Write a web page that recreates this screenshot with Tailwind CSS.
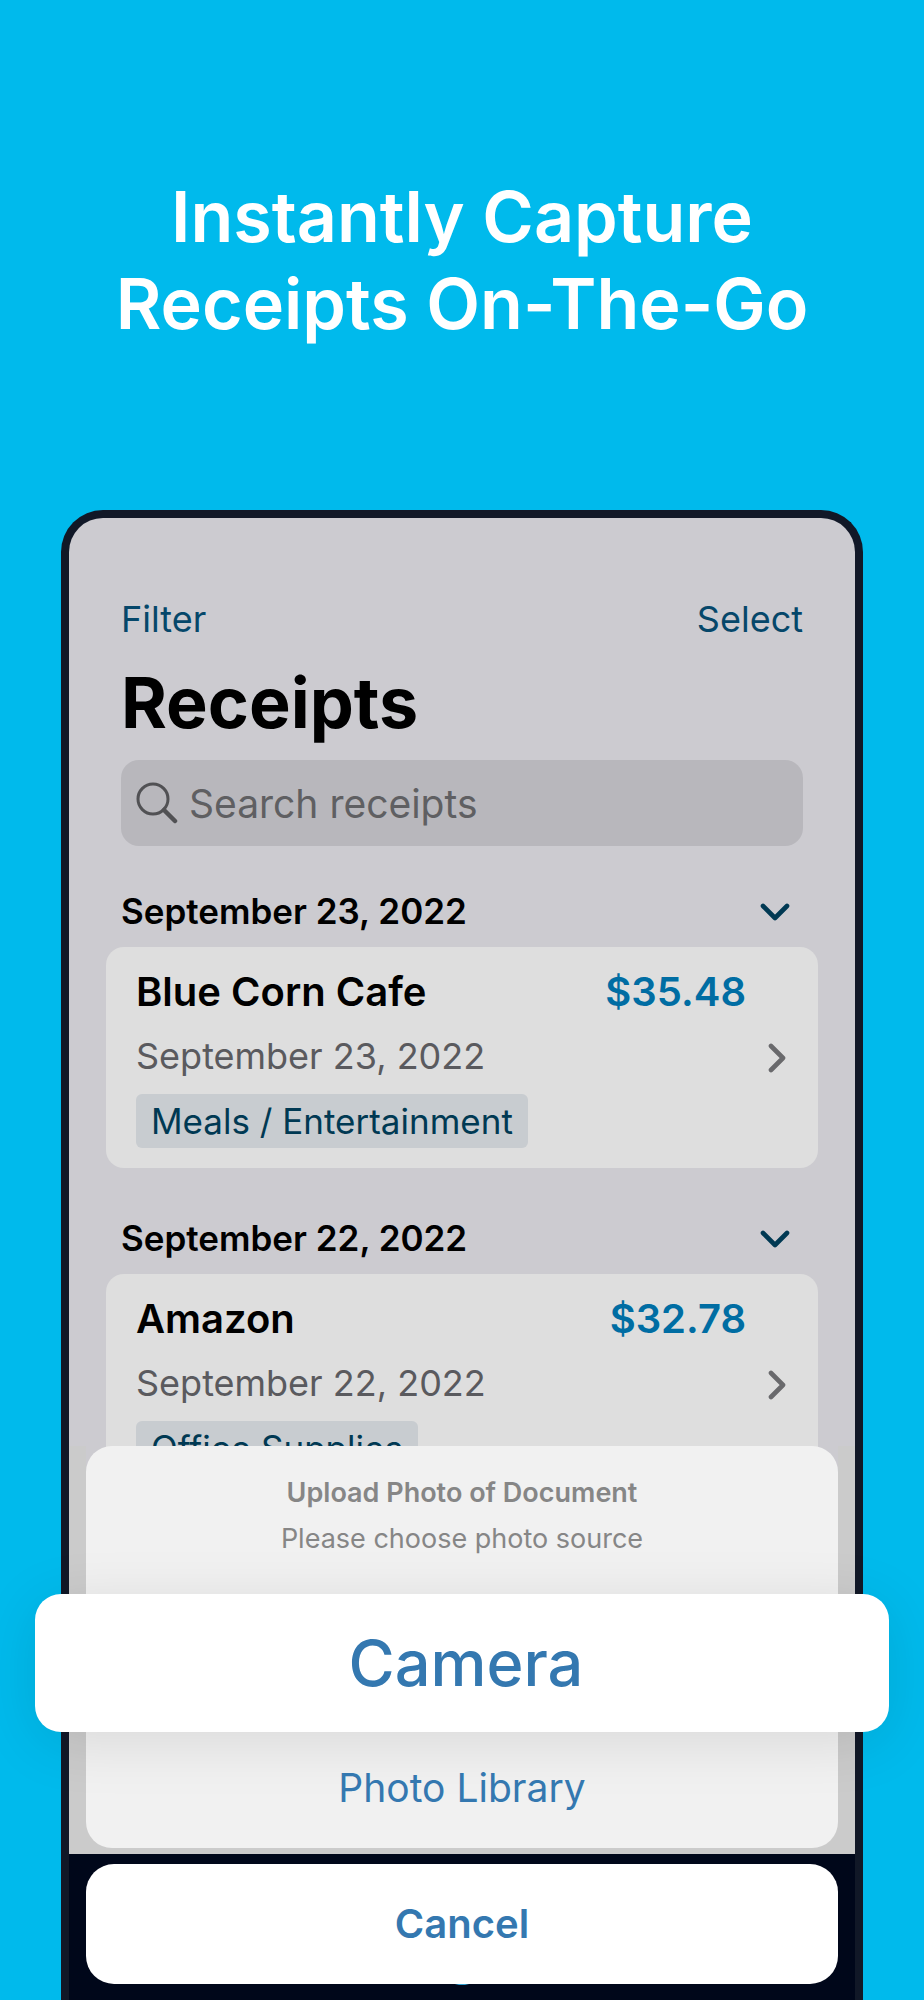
<!DOCTYPE html>
<html lang="en">
<head>
<meta charset="utf-8">
<meta name="viewport" content="width=device-width, initial-scale=1">
<title>Receipts</title>
<script src="https://cdn.jsdelivr.net/npm/@tailwindcss/browser@4"></script>
</head>
<body class="bg-[#00baec] font-['Inter','Liberation_Sans',sans-serif]">
<div class="flex min-h-screen flex-col overflow-hidden pt-[173px]">
  <h1 class="text-center text-[70px] leading-[87px] font-semibold text-white">Instantly Capture<br>Receipts On-The-Go</h1>

  <main class="relative mx-[61px] mt-[163px] flex grow flex-col rounded-t-[42px] border-8 border-b-0 border-[#111827] bg-[#cccbd0]">
    <div class="px-[37px] pt-[76px]">
      <div class="flex items-center justify-between px-[15px] text-[36px] leading-[50px] text-[#05476a]">
        <button type="button">Filter</button>
        <button type="button">Select</button>
      </div>
      <h2 class="mt-[17px] px-[15px] text-[70px] leading-[84px] font-bold text-black">Receipts</h2>
      <label class="mx-[15px] mt-[15px] flex h-[86px] items-center gap-[11px] rounded-[18px] bg-[#b8b7bc] px-[15px]">
        <svg class="size-[42px] shrink-0" viewBox="0 0 42 42" fill="none" stroke="#515154" stroke-linecap="round" aria-hidden="true"><circle cx="17" cy="17" r="15" stroke-width="3"/><path d="M28 28l11 11" stroke-width="4.5"/></svg>
        <input type="search" aria-label="Search receipts" placeholder="Search receipts" class="min-w-0 grow bg-transparent pt-[2px] text-[39px] leading-[50px] text-[#5f5f62] outline-none placeholder:text-[#5f5f62]">
      </label>

      <section class="mt-[42px]">
        <div class="flex h-[46px] items-center justify-between pr-[28px] pl-[15px]">
          <h3 class="text-[35px] leading-[46px] font-semibold text-black">September 23, 2022</h3>
          <button type="button" class="pt-[2px]" aria-label="Collapse September 23, 2022"><svg class="h-[18px] w-[30px]" viewBox="0 0 30 18" fill="none" stroke="#003953" stroke-width="4.6" stroke-linecap="round" stroke-linejoin="round"><path d="M3 3l12 12L27 3"/></svg></button>
        </div>
        <article class="mt-[13px] flex h-[221px] items-center justify-between rounded-[18px] bg-[#dedede] pr-[32px] pl-[30px]">
          <div class="min-w-0 grow pr-[22px]">
            <div class="flex justify-between text-[40px] leading-[50px] font-semibold"><h4 class="text-black">Blue Corn Cafe</h4><span class="text-[#006da3]">$35.48</span></div>
            <p class="mt-[14px] text-[36px] leading-[50px] text-[#5a5a5e]">September 23, 2022</p>
            <span class="mt-[13px] inline-block rounded-[6px] bg-[#c8ccd0] px-[15px] text-[35px] leading-[54px] text-[#003953]">Meals / Entertainment</span>
          </div>
          <a href="#blue-corn" aria-label="Open Blue Corn Cafe"><svg class="h-[30px] w-[18px]" viewBox="0 0 18 30" fill="none" stroke="#69696c" stroke-width="4.6" stroke-linecap="round" stroke-linejoin="round"><path d="M3 3l12 12L3 27"/></svg></a>
        </article>
      </section>

      <section class="mt-[47px]">
        <div class="flex h-[46px] items-center justify-between pr-[28px] pl-[15px]">
          <h3 class="text-[35px] leading-[46px] font-semibold text-black">September 22, 2022</h3>
          <button type="button" class="pt-[2px]" aria-label="Collapse September 22, 2022"><svg class="h-[18px] w-[30px]" viewBox="0 0 30 18" fill="none" stroke="#003953" stroke-width="4.6" stroke-linecap="round" stroke-linejoin="round"><path d="M3 3l12 12L27 3"/></svg></button>
        </div>
        <article class="mt-[13px] flex h-[221px] items-center justify-between rounded-[18px] bg-[#dedede] pr-[32px] pl-[30px]">
          <div class="min-w-0 grow pr-[22px]">
            <div class="flex justify-between text-[40px] leading-[50px] font-semibold"><h4 class="text-black">Amazon</h4><span class="text-[#006da3]">$32.78</span></div>
            <p class="mt-[14px] text-[36px] leading-[50px] text-[#5a5a5e]">September 22, 2022</p>
            <span class="mt-[13px] inline-block rounded-[6px] bg-[#c8ccd0] px-[15px] text-[35px] leading-[54px] text-[#003953]">Office Supplies</span>
          </div>
          <a href="#amazon" aria-label="Open Amazon"><svg class="h-[30px] w-[18px]" viewBox="0 0 18 30" fill="none" stroke="#69696c" stroke-width="4.6" stroke-linecap="round" stroke-linejoin="round"><path d="M3 3l12 12L3 27"/></svg></a>
        </article>
      </section>
    </div>

    <!-- Action sheet over the receipt list and the tab bar -->
    <div role="dialog" aria-labelledby="sheet-title" class="absolute inset-x-0 bottom-0">
      <div class="absolute inset-x-0 top-0 bottom-[146px] flex justify-between"><div class="w-[17px] bg-[#cbcbcb]"></div><div class="w-[17px] bg-[#cbcbcb]"></div></div>
      <div class="absolute inset-x-0 bottom-[146px] h-[30px] bg-[#cbcbcb]"></div>
      <div class="absolute inset-x-0 bottom-0 h-[146px] bg-[#00071a]"></div>
      <div class="relative px-[17px] pb-[16px]">
        <div class="rounded-[26px] bg-[#f1f1f1]">
          <div class="h-[148px] pt-[30px] text-center text-[27px] text-[#868686]">
            <h2 id="sheet-title" class="leading-[34px] font-semibold">Upload Photo of Document</h2>
            <p class="mt-[12px] leading-[34px]">Please choose photo source</p>
          </div>
          <button type="button" class="relative -mx-[51px] block h-[138px] w-[calc(100%+102px)] rounded-[26px] bg-white pl-[8px] text-[63px] leading-[138px] font-medium text-[#3478b0] shadow-[0_10px_60px_rgba(0,0,0,0.1)]">Camera</button>
          <button type="button" class="relative block h-[116px] w-full pb-[4px] text-[39px] leading-[50px] text-[#3478b0]">Photo Library</button>
        </div>
        <div class="relative mt-[16px]">
          <div class="absolute -bottom-px left-1/2 h-[20px] w-[26px] -translate-x-1/2 rounded-full bg-[#2f9fd0]"></div>
          <button type="button" class="relative block h-[120px] w-full rounded-[28px] bg-white text-[40px] leading-[120px] font-semibold text-[#3478b0]">Cancel</button>
        </div>
      </div>
    </div>
  </main>
</div>
</body>
</html>
